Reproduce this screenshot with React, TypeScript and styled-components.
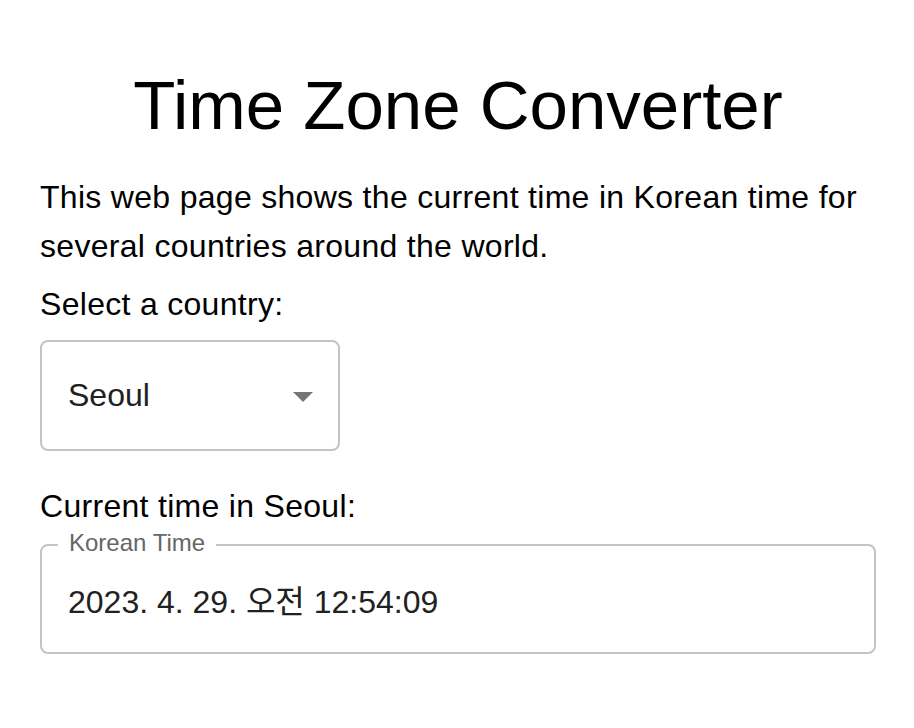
import React from "react";
import styled, { createGlobalStyle } from "styled-components";

const GlobalStyle = createGlobalStyle`
  body {
    margin: 0;
    background: #ffffff;
    font-family: "Liberation Sans", Arial, "Noto Sans CJK KR", sans-serif;
    color: #000000;
  }
`;

const Page = styled.div`
  padding: 0 38px 0 40px;
`;

const Title = styled.h1`
  font-size: 69px;
  font-weight: 400;
  line-height: 80px;
  text-align: center;
  margin: 66px 0 0;
`;

const Intro = styled.p`
  font-size: 32px;
  line-height: 49px;
  letter-spacing: 0.3px;
  margin: 27px 0 0;
`;

const FieldLabel = styled.div<{ $gap: number }>`
  font-size: 32px;
  line-height: 49px;
  letter-spacing: 0.3px;
  margin-top: ${(p) => p.$gap}px;
`;

const SelectBox = styled.div`
  box-sizing: border-box;
  width: 300px;
  height: 111px;
  margin-top: 11px;
  border: 2px solid #c4c4c4;
  border-radius: 8px;
  display: flex;
  align-items: center;
  justify-content: space-between;
  padding: 0 11px 0 26px;
  font-size: 32px;
  color: #212121;
`;

const Arrow = styled.svg`
  width: 48px;
  height: 48px;
  fill: #757575;
`;

const TimeField = styled.fieldset`
  box-sizing: border-box;
  margin: 0;
  min-width: 0;
  height: 123px;
  border: 2px solid #c4c4c4;
  border-radius: 8px;
  padding: 0 26px 13px;
  display: flex;
  align-items: center;
`;

const Legend = styled.legend`
  font-size: 24px;
  line-height: 24px;
  color: #666666;
  padding: 0 11px 4px;
  margin-left: -10px;
`;

const TimeValue = styled.div`
  font-size: 32px;
  color: #212121;
`;

export default function App() {
  return (
    <Page>
      <GlobalStyle />
      <Title>Time Zone Converter</Title>
      <Intro>
        This web page shows the current time in Korean time for several
        countries around the world.
      </Intro>
      <FieldLabel $gap={9}>Select a country:</FieldLabel>
      <SelectBox>
        <span>Seoul</span>
        <Arrow viewBox="0 0 24 24">
          <path d="M7 10l5 5 5-5z" />
        </Arrow>
      </SelectBox>
      <FieldLabel $gap={31}>Current time in Seoul:</FieldLabel>
      <TimeField>
        <Legend>Korean Time</Legend>
        <TimeValue>2023. 4. 29. 오전 12:54:09</TimeValue>
      </TimeField>
    </Page>
  );
}
